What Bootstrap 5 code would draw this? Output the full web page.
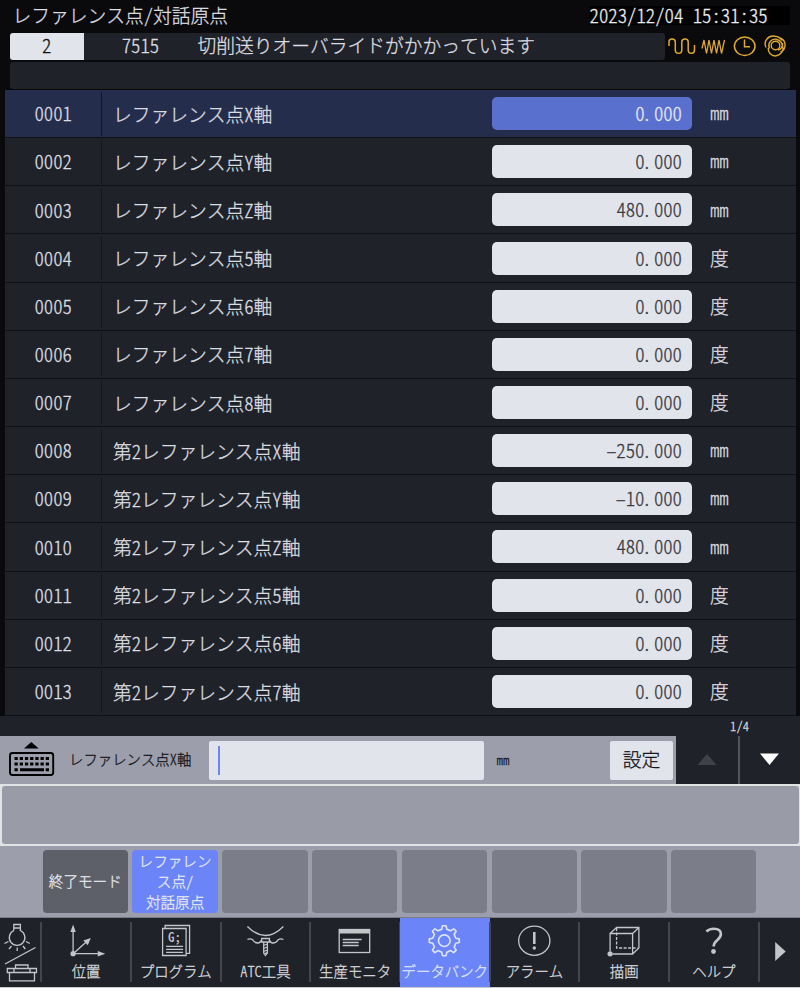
<!DOCTYPE html>
<html lang="ja">
<head>
<meta charset="utf-8">
<meta name="viewport" content="width=device-width, initial-scale=1">
<title>レファレンス点/対話原点</title>
<link href="https://cdn.jsdelivr.net/npm/bootstrap@5.3.0/dist/css/bootstrap.min.css" rel="stylesheet">
<style>
body{width:800px;height:988px;overflow:hidden;background:#0a0a0c;color:#dcdde0;font-family:"Noto Sans CJK JP",sans-serif;font-size:18.75px;font-weight:300;line-height:1;font-feature-settings:"hwid" 1;font-kerning:none;white-space:nowrap;-webkit-text-stroke:.3px}
.titlebar{height:33px;padding:0 10px 2px 12.5px}
.clock{background:#000;width:201px;height:19px;color:#eceded;padding-left:.6px}
.status{height:27px;margin:0 10px}
.msg{width:655px;background:#1f2229;border-radius:3px}
.msg>div{height:27px;padding-bottom:2px}
.msg-no{width:73.5px;background:#e2e4ec;color:#111;border-radius:3px 0 0 3px}
.msg-code{width:114px}
.submsg{height:27px;margin:2px 10px 0;background:#1f2229;border-radius:3px}
.params{height:626px;margin:1px 4px 0 5px;display:grid;grid-template-rows:repeat(13,1fr)}
.param{background:#1f2229;border-bottom:1.5px solid #101115}
.param.sel{background:#252d4c}
.no{width:97px;height:44px;border-right:1px solid #14161a;padding-left:.5px}
.nm{width:390px;padding-left:11px;padding-top:1px}
.val{width:200px;height:33px;line-height:32px;border-radius:5px;background:#e2e4ec;color:#3a3a3e;padding-right:10px}
.val i{font-style:normal;font-feature-settings:normal;display:inline-block;width:.5em;text-align:left}
.sel .val{background:#5a70cf;color:#e6e8f4}
.unit{padding-left:18px}
.unit.met{padding-bottom:2px}
.pager-strip{height:20px;background:#1f2229;font-size:12.6px;padding-right:51px}
.entry{height:48px;background:#9c9eab;color:#16171b}
.entry-name{font-size:14.4px;width:139.5px;padding-bottom:1px}
.entry-box{width:275px;height:39px;background:#e2e4ec;border-radius:2px;padding-left:9px}
.entry-unit{font-size:12.8px;padding-left:13px}
.caret-bar{width:2px;height:29px;background:#6b85f5}
.set-btn{width:63px;height:39px;background:#e2e4ec;border-radius:2px;color:#16171b;margin-right:3px;padding-bottom:2px}
.pg{width:62px;height:48px;background:#1f2229}
.pg.dn{border-left:2px solid #54565d}
.panel{height:62px;background:#e0e2e4;padding:2px 1px 2px 2px}
.panel>div{background:#999ba7;border-radius:3px}
.keys{height:71px;background:#9c9eab;padding:4px 43.5px 4px 42.6px;gap:4.4px}
.key{flex:1 1 0;background:#7b7d88;border-radius:4px;color:#e6e8ec;font-size:14.6px;line-height:20.3px;text-align:center}
.key.exit{background:#5d5f69}
.key.on{background:#6b85f8}
.menu{height:71px;background:#1f2229;border-top:1px solid #7a7c84;border-bottom:1px solid #c9cacd;color:#d6d7da;font-size:14.4px}
.mi{width:89.7px;flex:none;padding-top:2px}
.mi.first,.mi.next{width:41.2px}
.mi svg{display:block;height:42px;width:100%}
.mi.first svg,.mi.next svg{height:66px}
.mi .cap{margin-top:2px}
.mi.on{background:#6b85f8;color:#dfe5fd}
.mi.on svg{stroke:#dfe5fd}
.sep{width:2px;margin:4px -1px 5px -1px;flex:none;background:#44464c}
svg{fill:none;stroke:#c4c5c9;stroke-width:1.3}
.solid{fill:#c4c5c9;stroke:none}
.glyph{font-family:"Noto Sans CJK JP",sans-serif;font-weight:500;stroke:none;fill:#c4c5c9}
.gold{stroke:#e0a92e;stroke-width:1.5}
</style>
<script src="https://cdn.jsdelivr.net/npm/bootstrap@5.3.0/dist/js/bootstrap.bundle.min.js"></script>
</head>
<body>
<header>
<div class="titlebar d-flex align-items-center justify-content-between"><div>レファレンス点/対話原点</div><div class="clock d-flex align-items-center">2023/12/04 15:31:35</div></div>
<div class="status d-flex">
<div class="msg d-flex"><div class="msg-no d-flex align-items-center justify-content-center">2</div><div class="msg-code d-flex align-items-center justify-content-center">7515</div><div class="d-flex align-items-center">切削送りオーバライドがかかっています</div></div>
<svg class="gold" width="125" height="27" viewBox="665 33 125 27"><path d="M669 46V42Q669 39 672 39Q675.300 39 675.300 42V50Q675.300 53.300 678.600 53.300Q681.800 53.300 681.800 50V42Q681.800 39 685 39Q688.200 39 688.200 42V50Q688.200 53.300 691.500 53.300Q694.500 53.300 694.500 50V45"/><path d="M702 48.500L704 40L706.500 53.500L709 40L711.500 53.500L714 40L716.500 53.500L719 40L721.500 53.500L724.500 40" stroke-width="1.300"/><ellipse cx="744.700" cy="46.300" rx="10.300" ry="9.200"/><path d="M744.500 39.500V46.800h5.500"/><g stroke-width="1.400"><circle cx="775.500" cy="45.500" r="4.300"/><path d="M766 47.500A8 8 0 0 1 775 36.200Q779.500 36.500 782 40.500M769.500 48.500A6.500 6.500 0 0 1 776 39.200A8 8 0 0 1 782.500 46A7.500 7.500 0 0 1 770 53.500Q768 51 768.200 48M780 38A7.500 7.500 0 0 1 780.500 52M778 50Q783 49 782.500 43"/></g></svg>
</div>
<div class="submsg"></div>
</header>
<main>
<div class="params">
<div class="param sel d-flex align-items-center"><div class="no d-flex align-items-center justify-content-center">0001</div><div class="nm">レファレンス点X軸</div><div class="val text-end">0<i>.</i>000</div><div class="unit met">mm</div></div>
<div class="param d-flex align-items-center"><div class="no d-flex align-items-center justify-content-center">0002</div><div class="nm">レファレンス点Y軸</div><div class="val text-end">0<i>.</i>000</div><div class="unit met">mm</div></div>
<div class="param d-flex align-items-center"><div class="no d-flex align-items-center justify-content-center">0003</div><div class="nm">レファレンス点Z軸</div><div class="val text-end">480<i>.</i>000</div><div class="unit met">mm</div></div>
<div class="param d-flex align-items-center"><div class="no d-flex align-items-center justify-content-center">0004</div><div class="nm">レファレンス点5軸</div><div class="val text-end">0<i>.</i>000</div><div class="unit">度</div></div>
<div class="param d-flex align-items-center"><div class="no d-flex align-items-center justify-content-center">0005</div><div class="nm">レファレンス点6軸</div><div class="val text-end">0<i>.</i>000</div><div class="unit">度</div></div>
<div class="param d-flex align-items-center"><div class="no d-flex align-items-center justify-content-center">0006</div><div class="nm">レファレンス点7軸</div><div class="val text-end">0<i>.</i>000</div><div class="unit">度</div></div>
<div class="param d-flex align-items-center"><div class="no d-flex align-items-center justify-content-center">0007</div><div class="nm">レファレンス点8軸</div><div class="val text-end">0<i>.</i>000</div><div class="unit">度</div></div>
<div class="param d-flex align-items-center"><div class="no d-flex align-items-center justify-content-center">0008</div><div class="nm">第2レファレンス点X軸</div><div class="val text-end">–250<i>.</i>000</div><div class="unit met">mm</div></div>
<div class="param d-flex align-items-center"><div class="no d-flex align-items-center justify-content-center">0009</div><div class="nm">第2レファレンス点Y軸</div><div class="val text-end">–10<i>.</i>000</div><div class="unit met">mm</div></div>
<div class="param d-flex align-items-center"><div class="no d-flex align-items-center justify-content-center">0010</div><div class="nm">第2レファレンス点Z軸</div><div class="val text-end">480<i>.</i>000</div><div class="unit met">mm</div></div>
<div class="param d-flex align-items-center"><div class="no d-flex align-items-center justify-content-center">0011</div><div class="nm">第2レファレンス点5軸</div><div class="val text-end">0<i>.</i>000</div><div class="unit">度</div></div>
<div class="param d-flex align-items-center"><div class="no d-flex align-items-center justify-content-center">0012</div><div class="nm">第2レファレンス点6軸</div><div class="val text-end">0<i>.</i>000</div><div class="unit">度</div></div>
<div class="param d-flex align-items-center"><div class="no d-flex align-items-center justify-content-center">0013</div><div class="nm">第2レファレンス点7軸</div><div class="val text-end">0<i>.</i>000</div><div class="unit">度</div></div>
</div>
<div class="pager-strip d-flex align-items-center justify-content-end">1/4</div>
<div class="entry d-flex align-items-center">
<svg width="69" height="48" viewBox="0 736 69 48"><g stroke="none" fill="#000"><path d="M24 748.500L31.300 742L38.700 748.500Z"/><path d="M14.500 757h3.300v3h-3.300zm5.200 0h3.300v3h-3.300zm5.200 0h3.300v3h-3.300zm5.200 0h3.300v3h-3.300zm5.200 0h3.300v3h-3.300zm5.200 0h3.300v3h-3.300zm5.200 0h3.300v3h-3.300zM14.500 762.500h3.300v3h-3.300zm5.200 0h3.300v3h-3.300zm5.200 0h3.300v3h-3.300zm5.200 0h3.300v3h-3.300zm5.200 0h3.300v3h-3.300zm5.200 0h3.300v3h-3.300zm5.200 0h3.300v3h-3.300zM14.500 768.300h3.300v3h-3.300zm31.200 0h3.300v3h-3.300zM20 768.300h24v3h-24z"/></g><rect x="10" y="753" width="43.200" height="22" rx="2.500" stroke="#000" stroke-width="1.900"/></svg>
<div class="entry-name">レファレンス点X軸</div><div class="entry-box d-flex align-items-center"><div class="caret-bar"></div></div>
<div class="entry-unit">mm</div><div class="set-btn d-flex align-items-center justify-content-center ms-auto">設定</div>
<div class="pg d-flex"><svg width="62" height="48"><path d="M21.500 29L31 18L40.500 29Z" fill="#3f424a" stroke="none"/></svg></div>
<div class="pg dn d-flex"><svg width="60" height="48"><path d="M20 17.500H39L29.500 29Z" fill="#fff" stroke="none"/></svg></div>
</div>
<div class="panel"><div class="h-100"></div></div>
<div class="keys d-flex">
<div class="key exit d-flex align-items-center justify-content-center">終了モード</div><div class="key on d-flex align-items-center justify-content-center">レファレン<br>ス点/<br>対話原点</div><div class="key"></div><div class="key"></div><div class="key"></div><div class="key"></div><div class="key"></div><div class="key"></div>
</div>
</main>
<nav class="menu d-flex text-center">
<div class="mi first"><svg viewBox="0 920 41.200 66"><path d="M13.800 930.500V924.500H20.400V930.500A7.800 7.800 0 1 1 13.800 930.500M14 928H20.500M4.500 943.500L8.500 941.500M9 949L11.500 946M17.200 951V947.500M25.300 949L23 946M29.800 943.500L26 941.500M5 964L35.500 947.500M7.300 968.500H36.500V972.500H7.300ZM9.500 973V980.800H34.500V973M14 968.500V972.500M30 968.500V972.500M15.500 968V965H28V968"/></svg></div><div class="sep"></div>
<div class="mi"><svg viewBox="41.200 920 89.700 42"><path d="M73.300 953.700V930M73.300 953.700H100M73.300 953.700L87 941.500"/><path class="solid" d="M70.600 932L73.300 924.500L76 932ZM98 951L105.500 953.700L98 956.400ZM83.500 940.500L91 938L88 945.300Z"/><circle class="solid" cx="73.300" cy="953.700" r="2.600"/></svg><div class="cap">位置</div></div><div class="sep"></div>
<div class="mi"><svg viewBox="130.900 920 89.700 42"><path d="M165 928V925.500H189.500V953.300H186M162.500 928.500H186V955.500H162.500ZM166 946.300H183M166 949.300H183M166 952.300H183"/><text class="glyph" x="168" y="942" font-size="13">G;</text></svg><div class="cap">プログラム</div></div><div class="sep"></div>
<div class="mi"><svg viewBox="220.600 920 89.700 42"><path d="M247 926.500Q265 944.500 283 926.500M247 939.500Q250 938 252.500 940Q254 943 257.500 943Q260 943 260.500 940.500M283 939.500Q280 938 277.500 940Q276 943 272.500 943Q270 943 269.500 940.500M261.300 938.500H269V942H261.300ZM263.300 942V953L265 955.500L267 953V942M263.300 945.500L267 944M263.300 948.500L267 947M263.300 951.500L267 950M263.300 954L267 952.500"/></svg><div class="cap">ATC工具</div></div><div class="sep"></div>
<div class="mi"><svg viewBox="310.300 920 89.700 42"><rect x="339.500" y="929.500" width="30.500" height="23"/><rect class="solid" x="339.500" y="929.500" width="30.500" height="4"/><path d="M343 939.500H362M343 942.500H359M343 945.500H359"/></svg><div class="cap">生産モニタ</div></div><div class="sep"></div>
<div class="mi on"><svg viewBox="400 920 89.700 42"><circle cx="444.300" cy="940.700" r="5.800" stroke-width="1.600"/><path stroke-width="1.600" stroke-linejoin="round" d="M441.800 929.200L442.500 925.700H446.100L446.800 929.200L450.700 930.800L453.700 928.800L456.200 931.300L454.200 934.300L455.800 938.200L459.300 938.900V942.500L455.800 943.200L454.200 947.100L456.200 950.100L453.700 952.600L450.700 950.600L446.800 952.200L446.100 955.700H442.500L441.800 952.200L437.900 950.600L434.900 952.600L432.400 950.100L434.400 947.100L432.800 943.200L429.300 942.500V938.900L432.800 938.200L434.400 934.300L432.400 931.300L434.900 928.800L437.900 930.800Z"/></svg><div class="cap">データバンク</div></div><div class="sep"></div>
<div class="mi"><svg viewBox="489.700 920 89.700 42"><ellipse cx="534" cy="940.700" rx="15.600" ry="14.600"/><path d="M534 932V944" stroke-width="2.600"/><circle class="solid" cx="534" cy="948" r="1.700"/></svg><div class="cap">アラーム</div></div><div class="sep"></div>
<div class="mi"><svg viewBox="579.400 920 89.700 42"><path d="M610.500 951V933.500H633V954H613M610.500 933.500L617 927.500H639.300V948L633 954M633 933.500L639.300 927.500"/><path stroke-dasharray="3 1.500" d="M617 928V948H638"/><circle class="solid" cx="610.500" cy="953.800" r="2.600"/></svg><div class="cap">描画</div></div><div class="sep"></div>
<div class="mi"><svg viewBox="669.100 920 89.700 42"><path stroke-width="2.600" d="M706.500 931.500Q709.500 928.800 714 928.800Q721 928.800 721 934Q721 937 717.500 940Q713.800 943 713.800 946.500"/><circle class="solid" cx="713.600" cy="951.500" r="2.400"/></svg><div class="cap">ヘルプ</div></div><div class="sep"></div>
<div class="mi next"><svg viewBox="758.800 920 41.200 66"><path class="solid" d="M775 942L785.500 951.500L775 961Z"/></svg></div>
</nav>
</body>
</html>
